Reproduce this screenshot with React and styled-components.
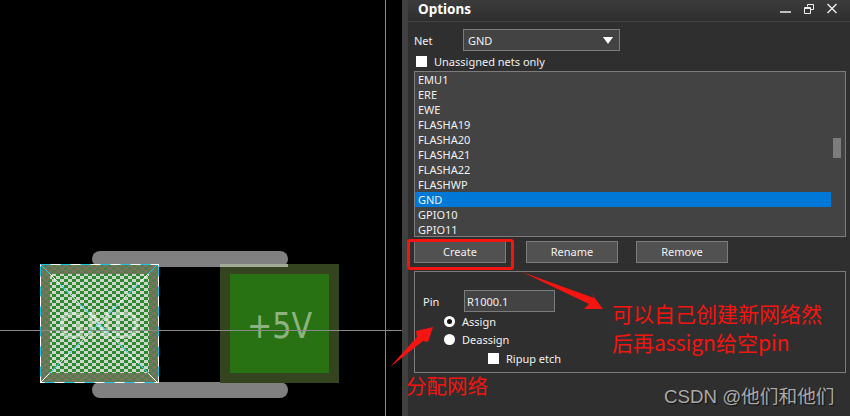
import React from 'react';
import styled, { createGlobalStyle } from 'styled-components';

const Global = createGlobalStyle`
  html, body { margin: 0; padding: 0; background: #000; overflow: hidden; }
  #root { width: 850px; height: 416px; }
`;

const Page = styled.div`
  position: relative;
  display: flex;
  width: 850px;
  height: 416px;
  overflow: hidden;
  font-family: "Noto Sans", "Open Sans", sans-serif;
  font-size: 11px;
  color: #f0f0f0;
`;

const Canvas = styled.div`
  width: 402px;
  flex: none;
  background: #000;
  svg { display: block; }
`;

const Splitter = styled.div`
  width: 6px;
  flex: none;
  background: #414141;
`;

const Panel = styled.div`
  flex: 1;
  display: flex;
  flex-direction: column;
  background: #2f2f2f;
`;

const TitleBar = styled.div`
  box-sizing: border-box;
  height: 22px;
  flex: none;
  display: flex;
  align-items: center;
  justify-content: space-between;
  padding: 0 13px 4px 10px;
  background: linear-gradient(#3c3c3c, #2e2e2e);
  border-bottom: 1px solid #434343;
`;

const Title = styled.div`
  font-size: 13.5px;
  font-weight: 700;
  color: #fff;
`;

const WindowIcons = styled.div`
  display: flex;
  align-items: center;
  gap: 13px;
  svg { display: block; }
`;

const Body = styled.div`
  display: flex;
  flex-direction: column;
  padding: 7px 4px 0 6px;
`;

const NetRow = styled.div`
  display: flex;
  align-items: center;
  height: 22px;
`;

const FieldLabel = styled.span`
  width: ${p => p.$w}px;
  flex: none;
`;

const Select = styled.div`
  box-sizing: border-box;
  width: 157px;
  height: 22px;
  display: flex;
  align-items: center;
  justify-content: space-between;
  padding: 0 6px 0 4px;
  background: #434343;
  border: 1px solid #7c7c7c;
`;

const Caret = styled.span`
  width: 0;
  height: 0;
  border-left: 5px solid transparent;
  border-right: 5px solid transparent;
  border-top: 7px solid #fff;
`;

const CheckRow = styled.label`
  display: flex;
  align-items: center;
  gap: 7px;
  height: 20px;
  padding-left: ${p => p.$indent || 2}px;
`;

const Box = styled.span`
  width: 11px;
  height: 11px;
  flex: none;
  background: #fff;
`;

const List = styled.div`
  position: relative;
  box-sizing: border-box;
  height: 166px;
  border: 1px solid #7c7c7c;
  background: #434343;
  overflow: hidden;
`;

const Item = styled.div`
  width: 416px;
  height: 15px;
  line-height: 15px;
  padding-left: 3px;
  box-sizing: border-box;
  background: ${p => (p.$selected ? '#0078d7' : 'transparent')};
`;

const Thumb = styled.div`
  position: absolute;
  left: 418px;
  top: 66px;
  width: 8px;
  height: 20px;
  background: #7c7c7c;
`;

const Buttons = styled.div`
  display: flex;
  margin-top: 4px;
`;

const Button = styled.div`
  box-sizing: border-box;
  width: 92px;
  height: 22px;
  margin-right: ${p => p.$gap}px;
  padding-bottom: 1px;
  display: flex;
  align-items: center;
  justify-content: center;
  background: #515151;
  border: 1px solid #7c7c7c;
`;

const GroupBox = styled.div`
  box-sizing: border-box;
  height: 102px;
  margin-top: 8px;
  padding: 18px 0 0 8px;
  border: 1px solid #7c7c7c;
`;

const PinRow = styled.div`
  display: flex;
  align-items: center;
  height: 22px;
`;

const Input = styled.div`
  box-sizing: border-box;
  width: 91px;
  height: 22px;
  display: flex;
  align-items: center;
  padding-left: 2px;
  background: #434343;
  border: 1px solid #7c7c7c;
`;

const RadioRow = styled.div`
  display: flex;
  align-items: center;
  gap: 7px;
  height: 18px;
  padding-left: 21px;
  &:first-of-type { margin-top: 2px; }
`;

const Radio = styled.span`
  box-sizing: border-box;
  width: 11px;
  height: 11px;
  border-radius: 50%;
  flex: none;
  background: ${p => (p.$on ? '#111' : '#fff')};
  border: ${p => (p.$on ? '3px solid #fff' : 'none')};
`;

const Marker = styled.div`
  position: absolute;
  left: 407px;
  top: 239px;
  width: 107px;
  height: 31px;
  box-sizing: border-box;
  border: 3px solid #f5140f;
  border-radius: 3px;
`;

const Arrow = styled.svg`
  position: absolute;
  left: 0;
  top: 0;
  pointer-events: none;
`;

const Note = styled.div`
  position: absolute;
  left: ${p => p.$x}px;
  top: ${p => p.$y}px;
  font-family: "Noto Sans CJK SC", "Noto Sans", sans-serif;
  font-size: ${p => p.$size}px;
  line-height: 28px;
  color: #f5140f;
  white-space: nowrap;
`;

const Watermark = styled.div`
  position: absolute;
  left: 664px;
  top: 385px;
  font-family: "Liberation Sans", "Noto Sans CJK SC", sans-serif;
  font-size: 18.7px;
  line-height: 24px;
  color: #a9a9a9;
  text-shadow: 1px 1px 1px #111;
  white-space: nowrap;
`;

const nets = ['EMU1', 'ERE', 'EWE', 'FLASHA19', 'FLASHA20', 'FLASHA21', 'FLASHA22', 'FLASHWP', 'GND', 'GPIO10', 'GPIO11'];

const Board = () => (
  <svg width="402" height="416" viewBox="0 0 402 416">
    <defs>
      <pattern id="chk" width="8" height="6" patternUnits="userSpaceOnUse" x="40" y="264">
        <rect width="8" height="6" fill="#2c8a2e" />
        <rect width="4" height="3" fill="#d0d6ce" />
        <rect x="4" y="3" width="4" height="3" fill="#d0d6ce" />
      </pattern>
      <pattern id="chkEdge" width="8" height="6" patternUnits="userSpaceOnUse" x="40" y="264">
        <rect width="8" height="6" fill="#587a4c" />
        <rect width="4" height="3" fill="#76765e" />
        <rect x="4" y="3" width="4" height="3" fill="#76765e" />
      </pattern>
    </defs>
    <rect x="92" y="251" width="196" height="16" rx="8" fill="#808080" />
    <rect x="92" y="382" width="196" height="16" rx="8" fill="#808080" />
    <rect x="220" y="264" width="119" height="119" fill="#33441f" />
    <rect x="220" y="264" width="68" height="3" fill="#a3ab97" />
    <rect x="230" y="274" width="99" height="99" fill="#287214" />
    <text x="247" y="338" textLength="65" lengthAdjust="spacingAndGlyphs" fontFamily="DejaVu Sans, sans-serif" fontSize="36" fill="#8fb380">+5V</text>
    <rect x="40" y="264" width="119" height="119" fill="url(#chkEdge)" />
    <rect x="50" y="274" width="99" height="99" fill="url(#chk)" />
    <text x="58" y="338" textLength="82" lengthAdjust="spacingAndGlyphs" fontFamily="DejaVu Sans, sans-serif" fontSize="36" fill="#eef3ec" fillOpacity="0.5">GND</text>
    <g fill="none" strokeWidth="1">
      <path d="M40 264L158 383M158 264L40 383" stroke="#fff" />
      <path d="M40 264L158 383M158 264L40 383" stroke="#18c4e8" strokeDasharray="14 14" />
      <rect x="40.500" y="264.500" width="118" height="118" stroke="#fff" />
      <rect x="40.500" y="264.500" width="118" height="118" stroke="#18c4e8" strokeDasharray="10 10" />
    </g>
    <path d="M0 330.500H402M385.500 0V416" stroke="#8a8a8a" strokeWidth="1" />
  </svg>
);

export default function App() {
  return (
    <Page>
      <Global />
      <Canvas>
        <Board />
      </Canvas>
      <Splitter />
      <Panel>
        <TitleBar>
          <Title>Options</Title>
          <WindowIcons>
            <svg width="11" height="12" viewBox="0 0 11 12"><path d="M0 9H11" stroke="#eee" strokeWidth="1.500" /></svg>
            <svg width="10" height="10" viewBox="0 0 10 10" fill="none" stroke="#eee"><path d="M3.500 2.500V.5H9.500V5.500H7M.5 3.500H6.500V9.500H.5ZM.5 4.500H6.500" /></svg>
            <svg width="10" height="11" viewBox="0 0 10 11" fill="none" stroke="#eee" strokeWidth="1.400"><path d="M.5 1L9.500 10M9.500 1L.5 10" /></svg>
          </WindowIcons>
        </TitleBar>
        <Body>
          <NetRow>
            <FieldLabel $w={49}>Net</FieldLabel>
            <Select>GND<Caret /></Select>
          </NetRow>
          <CheckRow>
            <Box />
            Unassigned nets only
          </CheckRow>
          <List>
            {nets.map(n => (
              <Item key={n} $selected={n === 'GND'}>{n}</Item>
            ))}
            <Thumb />
          </List>
          <Buttons>
            <Button $gap={20}>Create</Button>
            <Button $gap={18}>Rename</Button>
            <Button $gap={0}>Remove</Button>
          </Buttons>
          <GroupBox>
            <PinRow>
              <FieldLabel $w={41}>Pin</FieldLabel>
              <Input>R1000.1</Input>
            </PinRow>
            <RadioRow><Radio $on />Assign</RadioRow>
            <RadioRow><Radio />Deassign</RadioRow>
            <CheckRow $indent={65}><Box />Ripup etch</CheckRow>
          </GroupBox>
        </Body>
      </Panel>
      <Marker />
      <Arrow width="850" height="416" viewBox="0 0 850 416">
        <path d="M522 272L594 298L591 293L603 309L584 309L589 304Z" fill="#f5140f" />
        <path d="M390 367L417 337L416 331L433 327L428 342L423 341Z" fill="#f5140f" />
      </Arrow>
      <Note $x={612} $y={299} $size={21}>可以自己创建新网络然</Note>
      <Note $x={612} $y={328} $size={21}>后再assign给空pin</Note>
      <Note $x={406} $y={371} $size={20.500}>分配网络</Note>
      <Watermark>CSDN @他们和他们</Watermark>
    </Page>
  );
}
